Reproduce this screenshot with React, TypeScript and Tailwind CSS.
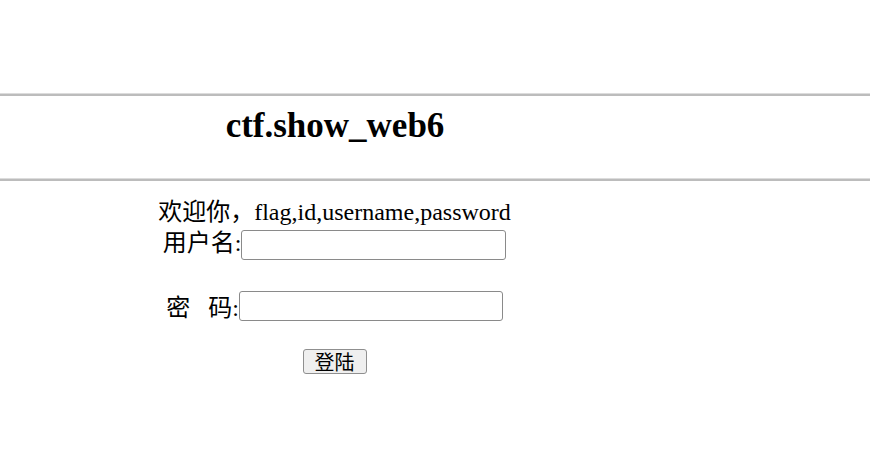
const serif = "font-['Liberation_Serif','Noto_Sans_CJK_SC',serif]";

function Rule() {
  return <div className="h-[3px] border-t border-[#dcdcdc] bg-[#bcbcbc]" />;
}

export default function App() {
  return (
    <div className={`min-h-[476px] w-[870px] bg-white text-black ${serif}`}>
      <div className="h-[93px]" />
      <Rule />
      <div className="w-[670px] pt-[12px] pb-[34px] text-center">
        <h2 className="text-[35px] leading-[36px] font-bold">ctf.show_web6</h2>
      </div>
      <Rule />

      <form className="flex w-[669px] flex-col items-center pt-[17px] text-[24px]">
        <div className="leading-[28px]">欢迎你，flag,id,username,password</div>

        <div className="mt-[4px] flex items-start">
          <span className="leading-[26px]">用户名:</span>
          <input
            type="text"
            className="h-[30px] w-[265px] rounded-[3px] border border-[#8a8a8a] bg-white"
          />
        </div>

        <div className="mt-[31px] flex items-start">
          <span className="mt-[4px] leading-[26px] whitespace-pre">密   码:</span>
          <input
            type="password"
            className="h-[30px] w-[264px] rounded-[3px] border border-[#8a8a8a] bg-white"
          />
        </div>

        <button
          type="button"
          className="mt-[28px] h-[25px] w-[64px] rounded-[3px] border border-[#8f8f8f] bg-[#efefef] text-[20px] leading-[23px] font-['Noto_Sans_CJK_SC',sans-serif]"
        >
          登陆
        </button>
      </form>
    </div>
  );
}
